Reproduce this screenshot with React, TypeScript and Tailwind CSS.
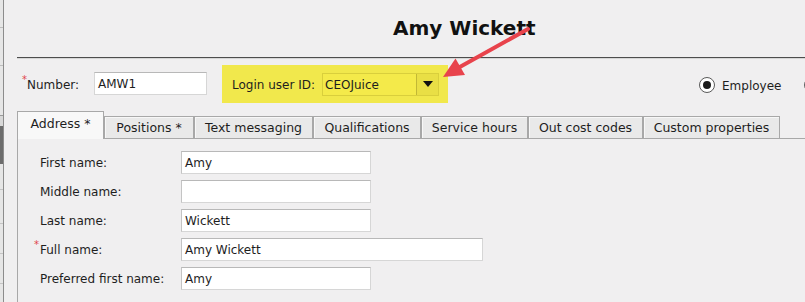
import React from "react";

const Field = ({ label, value, wide, required }: { label: string; value: string; wide?: boolean; required?: boolean }) => (
  <div className="flex items-center h-[23px]">
    <div className="w-[141px] shrink-0 flex items-center pt-[1px]">
      {required && <span className="-ml-[6px] w-[6px] text-[10px] leading-none text-[#e0434c] self-start -mt-[1px]">*</span>}
      <span>{label}</span>
    </div>
    <div
      className={`${wide ? "w-[302px]" : "w-[190px]"} shrink-0 h-[23px] bg-white border border-[#d6d6d6] border-t-[#b8b8b8] border-l-[#c4c4c4] flex items-center pl-[3px] pt-[1px]`}
    >
      {value}
    </div>
  </div>
);

const tabs: { name: string; w: string }[] = [
  { name: "Positions *", w: "w-[90px]" },
  { name: "Text messaging", w: "w-[119px]" },
  { name: "Qualifications", w: "w-[108px]" },
  { name: "Service hours", w: "w-[107px]" },
  { name: "Out cost codes", w: "w-[115px]" },
  { name: "Custom properties", w: "w-[137px]" },
];

export default function App() {
  return (
    <div className="w-[805px] h-[302px] overflow-hidden bg-[#f0eff0] flex relative font-['DejaVu_Sans',sans-serif] text-[12px] text-[#1e1e1e]">
      {/* left edge strip */}
      <div className="w-[4px] shrink-0 flex flex-col border-r border-[#8c8c8c] bg-[#e6e6e6]">
        <div className="h-[28px] border-b border-[#bdbdbd]" />
        <div className="h-[38px] border-b border-[#bdbdbd]" />
        <div className="h-[50px] border-b border-[#9a9a9a]" />
        <div className="h-[10px] bg-[#d8d8d8]" />
        <div className="h-[38px] bg-[#6c6c6c]" />
        <div className="h-[26px] border-b border-[#c4c4c4]" />
        <div className="h-[34px] border-b border-[#c4c4c4]" />
        <div className="h-[30px] border-b border-[#c4c4c4]" />
        <div className="h-[30px] border-b border-[#c4c4c4]" />
      </div>

      <div className="ml-[13px] w-[788px] shrink-0 flex flex-col">
        {/* title */}
        <div className="h-[57px] pl-[376px] pt-[16px]">
          <span className="text-[20px] font-bold text-[#111] leading-[24px] whitespace-nowrap">Amy Wickett</span>
        </div>
        <div className="h-px bg-[#4d4d4d]" />
        <div className="h-px bg-[#d6d6d6]" />

        {/* number / login row */}
        <div className="mt-[6px] h-[38px] flex items-center whitespace-nowrap">
          <div className="ml-[5px] w-[72px] shrink-0 flex items-center pt-[2px]">
            <span className="text-[10px] leading-none text-[#e0434c] self-start -mt-[1px]">*</span>
            <span>Number:</span>
          </div>
          <div className="w-[113px] shrink-0 h-[23px] bg-white border border-[#d6d6d6] border-t-[#b8b8b8] flex items-center pl-[3px] mt-[-1px] pt-[1px]">
            AMW1
          </div>
          <div className="ml-[15px] w-[226px] shrink-0 h-[38px] bg-[#f1e84c] flex items-center pl-[10px]">
            <span className="pt-[2px]">Login user ID:</span>
            <div className="ml-[7px] w-[117px] shrink-0 h-[23px] bg-[#f4ea4a] border border-[#d9cf3c] flex items-center">
              <span className="pl-[2px] pt-[2px] flex-1">CEOJuice</span>
              <div className="w-[22px] h-[21px] border-l border-[#c2b835] bg-[#e9df45] flex items-center justify-center">
                <svg width="10" height="6" viewBox="0 0 10 6">
                  <path d="M0 0 L10 0 L5 6 Z" fill="#111" />
                </svg>
              </div>
            </div>
          </div>
          <div className="ml-[251px] shrink-0 flex items-center pt-[1px]">
            <div className="w-[16px] h-[16px] shrink-0 rounded-full border border-[#5a5a5a] bg-white flex items-center justify-center">
              <div className="w-[8px] h-[8px] rounded-full bg-[#1a1a1a]" />
            </div>
            <span className="ml-[7px] pt-[2px]">Employee</span>
            <div className="ml-[23px] w-[16px] h-[16px] rounded-full border border-[#5a5a5a] bg-white shrink-0" />
          </div>
        </div>

        {/* tabs */}
        <div className="mt-[8px] flex items-end h-[27px] text-[12.5px] whitespace-nowrap">
          <div className="w-[87px] shrink-0 h-[28px] -mb-px relative z-10 bg-[#f8f8f8] border border-b-0 border-[#a8a8a8] flex items-center justify-center pb-[2px]">
            Address *
          </div>
          {tabs.map((t) => (
            <div
              key={t.name}
              className={`${t.w} shrink-0 h-[22px] bg-[#e9e9e9] border border-[#a8a8a8] border-b-0 shadow-[inset_1px_1px_0_#f7f7f7] flex items-center justify-center pt-[2px]`}
            >
              {t.name}
            </div>
          ))}
        </div>

        {/* panel */}
        <div className="flex-1 border-t border-l border-[#a8a8a8] pl-[22px] pt-[12px] flex flex-col gap-[6px]">
          <Field label="First name:" value="Amy" />
          <Field label="Middle name:" value="" />
          <Field label="Last name:" value="Wickett" />
          <Field label="Full name:" value="Amy Wickett" wide required />
          <Field label="Preferred first name:" value="Amy" />
        </div>
      </div>

      {/* annotation arrow */}
      <svg className="absolute left-0 top-0 pointer-events-none" width="805" height="302" viewBox="0 0 805 302">
        <line x1="528" y1="29" x2="458" y2="68" stroke="#e8434c" strokeWidth="4" strokeLinecap="round" />
        <path d="M443 77 L455.5 58.5 L465 75 Z" fill="#e8434c" />
      </svg>
    </div>
  );
}
